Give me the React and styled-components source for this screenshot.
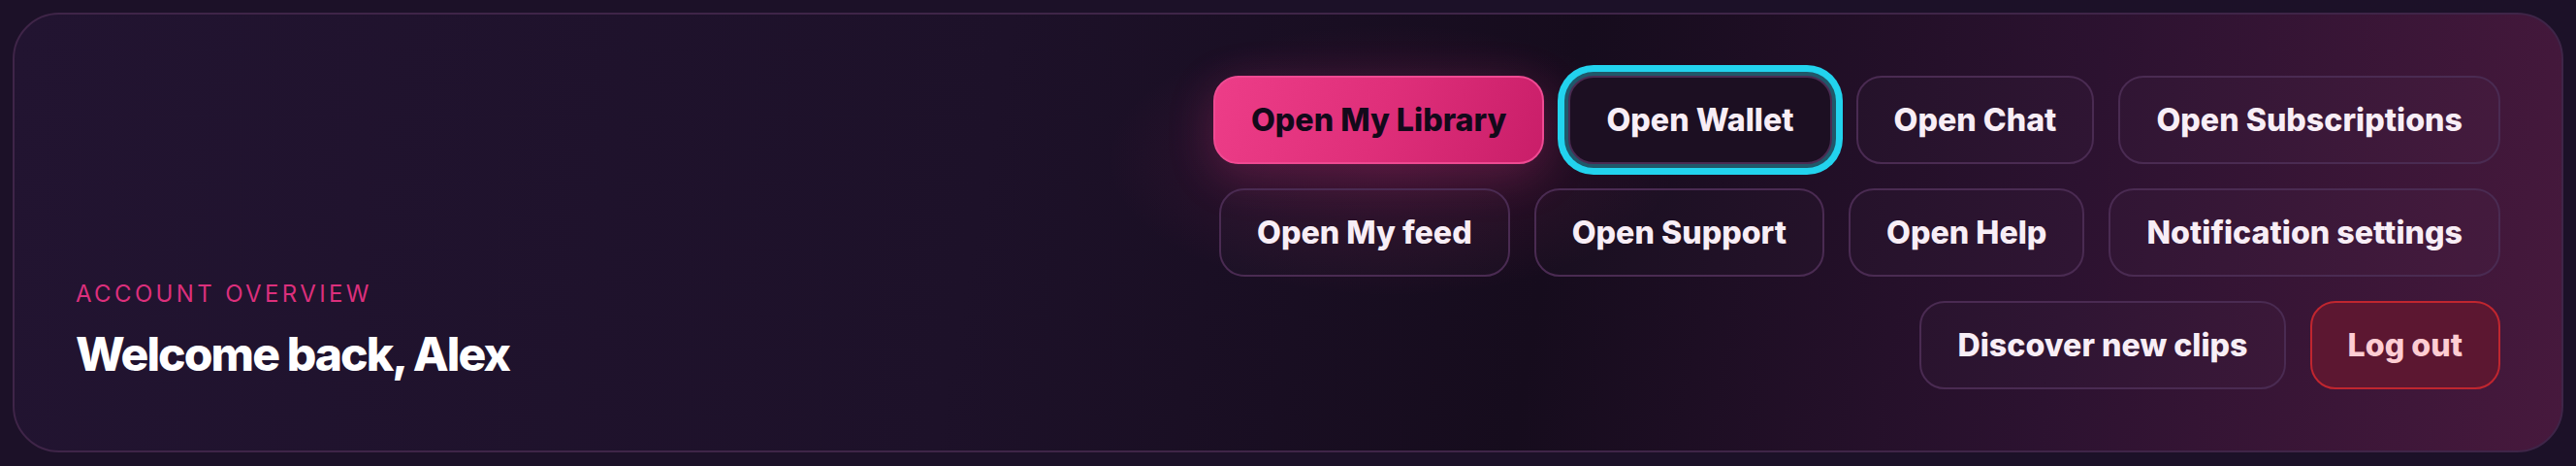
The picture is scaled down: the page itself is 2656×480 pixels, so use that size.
import React from "react";
import styled, { createGlobalStyle, css } from "styled-components";

const GlobalStyle = createGlobalStyle`
  * {
    box-sizing: border-box;
  }
  body {
    margin: 0;
    padding: 13px;
    background: #1c1128;
    font-family: Inter, "Noto Sans", "Liberation Sans", sans-serif;
  }
`;

const actions = [
  { label: "Open My Library", variant: "primary" },
  { label: "Open Wallet", focused: true },
  { label: "Open Chat" },
  { label: "Open Subscriptions" },
  { label: "Open My feed" },
  { label: "Open Support" },
  { label: "Open Help" },
  { label: "Notification settings" },
  { label: "Discover new clips" },
  { label: "Log out", variant: "danger" },
];

const App = () => {
  return (
    <>
      <GlobalStyle />
      <Card>
        <Intro>
          <Eyebrow>Account overview</Eyebrow>
          <Title>Welcome back, Alex</Title>
        </Intro>
        <Actions>
          {actions.map((item) => (
            <ActionButton
              key={item.label}
              type="button"
              $variant={item.variant || "ghost"}
              $focused={item.focused}
            >
              {item.label}
            </ActionButton>
          ))}
        </Actions>
      </Card>
    </>
  );
};

export default App;

const Card = styled.section`
  display: flex;
  justify-content: space-between;
  align-items: flex-end;
  gap: 48px;
  padding: 63px;
  border: 2px solid #3f2548;
  border-radius: 48px;
  background:
    radial-gradient(
      ellipse 420px 200px at 1420px 150px,
      rgba(214, 40, 120, 0.16),
      transparent 70%
    ),
    linear-gradient(
      100deg,
      #221431 0%,
      #1d1129 38%,
      #160c1d 60%,
      #2c1230 80%,
      #47193d 100%
    );
`;

const Intro = styled.div`
  display: flex;
  flex-direction: column;
  gap: 8px;
`;

const Eyebrow = styled.span`
  font-size: 24px;
  line-height: 36px;
  letter-spacing: 0.14em;
  text-transform: uppercase;
  color: #dc2f7c;
`;

const Title = styled.h1`
  margin: 0;
  font-size: 48px;
  line-height: 72px;
  font-weight: 800;
  letter-spacing: -0.04em;
  color: #ffffff;
`;

const Actions = styled.div`
  display: flex;
  flex-wrap: wrap;
  justify-content: flex-end;
  gap: 25px;
  max-width: 1460px;
`;

const variants = {
  primary: css`
    color: #13091a;
    border-color: #ee4a92;
    background: linear-gradient(110deg, #ed3d88 0%, #df2f7a 50%, #c91e69 100%);
    box-shadow: 0 12px 48px rgba(236, 64, 137, 0.24);
  `,
  ghost: css`
    color: #f8eef6;
    border-color: #4a2b52;
    background: rgba(255, 255, 255, 0.015);
  `,
  danger: css`
    color: #fecdd3;
    border-color: #c0262f;
    background: #5c1731;
  `,
};

const ActionButton = styled.button`
  height: 91px;
  padding: 0 37px;
  border: 2px solid;
  border-radius: 26px;
  font-family: Inter, "Noto Sans", "Liberation Sans", sans-serif;
  font-size: 32.2px;
  font-weight: 800;
  letter-spacing: 0;
  white-space: nowrap;
  cursor: pointer;
  ${({ $variant }) => variants[$variant]}
  ${({ $focused }) =>
    $focused &&
    css`
      background: #1c0f22;
      box-shadow: 0 0 0 4px #1f586a, 0 0 0 11px #22d3ee;
    `}
`;
